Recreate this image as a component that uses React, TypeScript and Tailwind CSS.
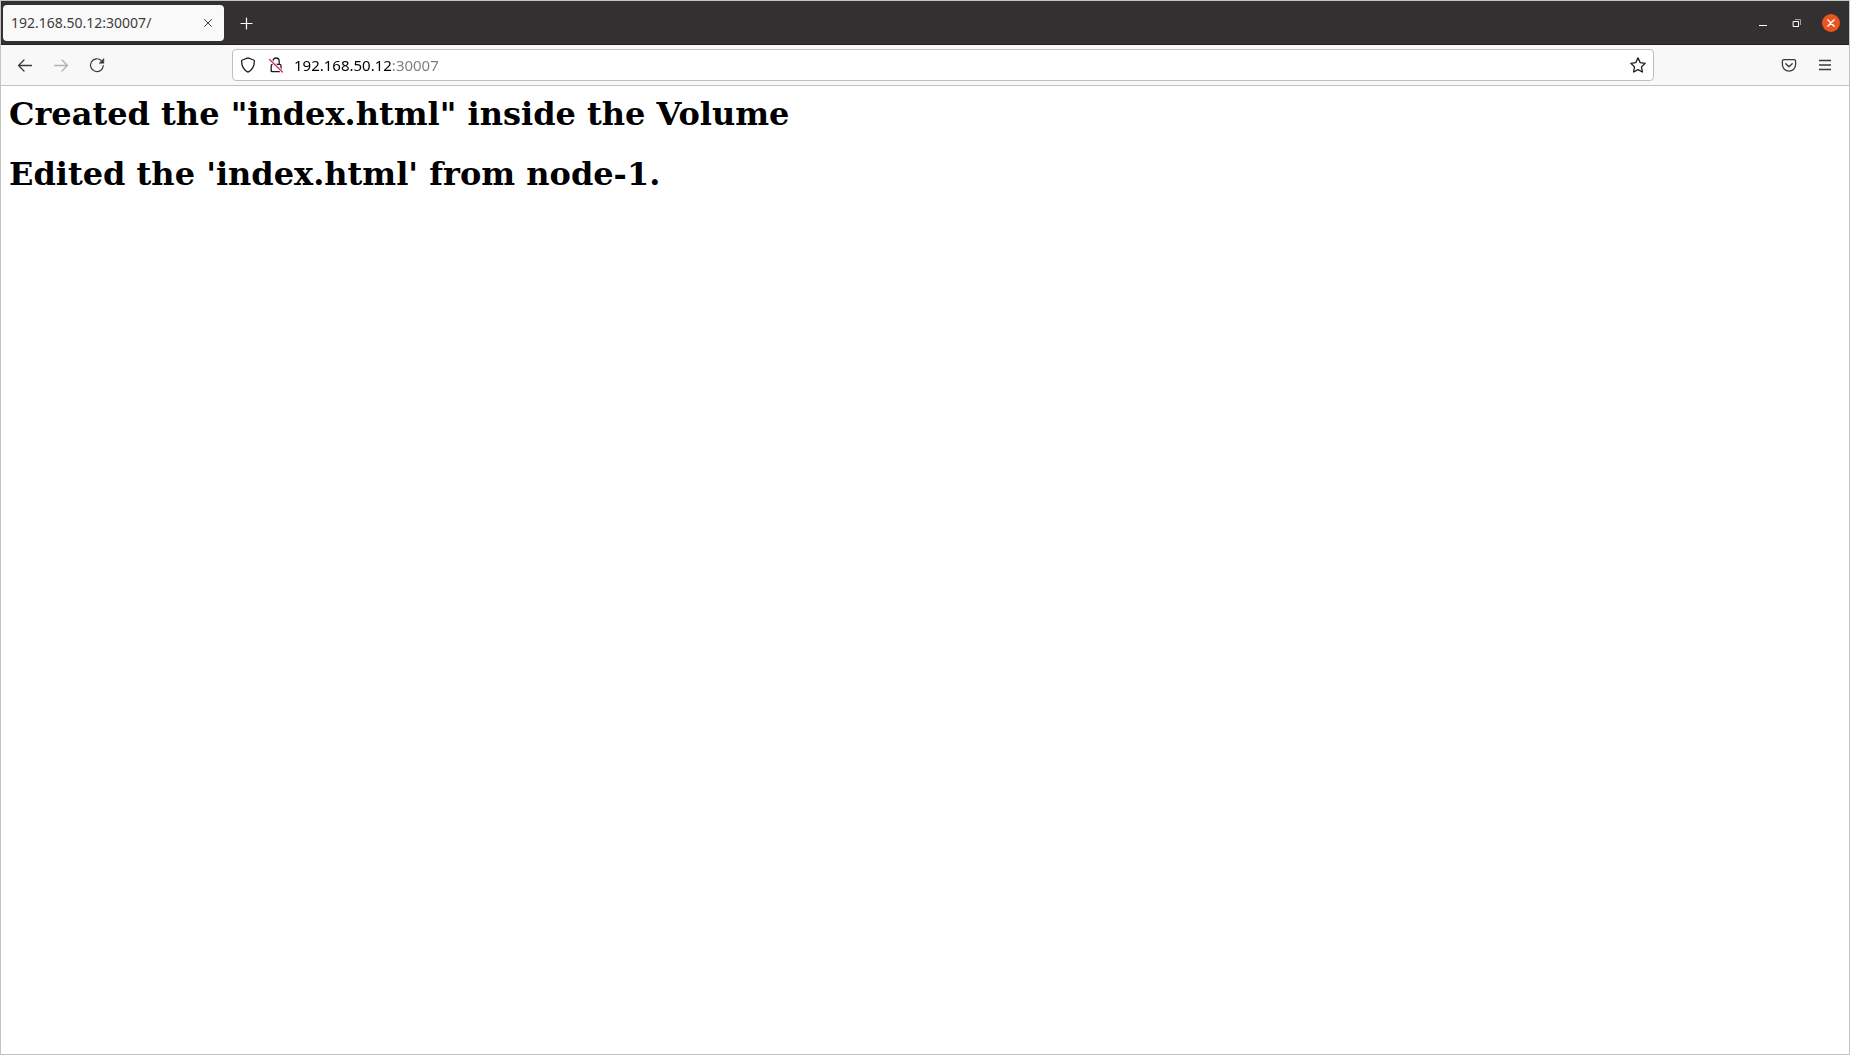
import { useState } from "react";
import type { ReactNode } from "react";

function Icon({ children }: { children: ReactNode }) {
  return (
    <svg
      viewBox="0 0 16 16"
      className="size-4 shrink-0"
      fill="none"
      stroke="currentColor"
      strokeWidth="1.3"
      strokeLinecap="round"
      strokeLinejoin="round"
      aria-hidden="true"
    >
      {children}
    </svg>
  );
}

function ToolButton({
  label,
  disabled,
  children,
}: {
  label: string;
  disabled?: boolean;
  children: ReactNode;
}) {
  return (
    <button
      type="button"
      aria-label={label}
      disabled={disabled}
      className="flex size-8 shrink-0 items-center justify-center rounded text-[#3a3a3a] disabled:text-[#b0b0b0]"
    >
      {children}
    </button>
  );
}

function TabStrip() {
  return (
    <header className="flex h-11 shrink-0 items-center border-b border-[#222020] bg-[#333031] pt-px pl-0.5 pr-[9px]">
      <div className="flex h-9 w-[221px] items-center justify-between rounded bg-[#f9f9f9] px-2 text-sm text-[#3d3d3d]">
        <span>192.168.50.12:30007/</span>
        <button type="button" aria-label="Close tab" className="flex size-4 items-center justify-center">
          <Icon>
            <path d="M4.500 4.500l7 7M11.500 4.500l-7 7" strokeWidth="1" />
          </Icon>
        </button>
      </div>
      <button
        type="button"
        aria-label="New tab"
        className="ml-1.5 flex size-8 items-center justify-center text-white"
      >
        <Icon>
          <path d="M8.500 3v11M3 8.500h11" strokeWidth="1.200" />
        </Icon>
      </button>
      <div className="ml-auto flex items-center gap-4 text-white">
        <button type="button" aria-label="Minimize" className="flex size-[18px] items-center justify-center">
          <Icon>
            <path d="M4 10.500h8" strokeWidth="1" strokeLinecap="butt" />
          </Icon>
        </button>
        <button type="button" aria-label="Restore" className="flex size-[18px] items-center justify-center">
          <Icon>
            <path d="M6 4.500h5.500V10" stroke="#a09e9e" strokeWidth="1" strokeLinecap="butt" strokeLinejoin="miter" />
            <path d="M4.500 6.500h5v5h-5z" strokeWidth="1" strokeLinejoin="miter" />
          </Icon>
        </button>
        <button
          type="button"
          aria-label="Close window"
          className="flex size-[18px] items-center justify-center rounded-full bg-[#e95420]"
        >
          <Icon>
            <path d="M4.800 4.800l6.400 6.400M11.200 4.800l-6.400 6.400" strokeWidth="1.400" />
          </Icon>
        </button>
      </div>
    </header>
  );
}

function AddressBar() {
  const [url, setUrl] = useState("192.168.50.12:30007");
  return (
    <div className="flex h-8 min-w-0 flex-1 items-center rounded border border-[#bfbfbf] bg-white px-[7px] text-[#1c1c1c]">
      <button type="button" aria-label="Tracking protection" className="flex">
        <Icon>
          <path d="M8 .9L13.600 3c.5.2.8.6.8 1.100 0 5.200-2 9-6.400 11-4.400-2-6.400-5.800-6.400-11 0-.5.300-.9.800-1.100z" />
        </Icon>
      </button>
      <button type="button" aria-label="Connection is not secure" className="ml-3 flex">
        <Icon>
          <path d="M4.800 6.800V4.200a3.200 3.200 0 0 1 6.400 0v3M3.200 14.600V8.600c0-.8.500-1.300 1.300-1.300h7.200c.8 0 1.300.5 1.300 1.300v4.400M3.200 13.300c0 .8.500 1.300 1.300 1.300h7.500" />
          <path d="M1.500 2.500l13 12.500" stroke="#fff" strokeWidth="3" strokeLinecap="butt" />
          <path d="M1.500 2.500l13 12.500" stroke="#e22850" strokeWidth="1.300" />
        </Icon>
      </button>
      <input
        type="text"
        aria-label="Address"
        value={url}
        onChange={(e) => setUrl(e.target.value)}
        spellCheck={false}
        className="ml-2.5 h-6 min-w-0 flex-1 bg-[linear-gradient(90deg,#000000_98px,#7c7c80_98px)] bg-clip-text text-[15px] text-transparent caret-black outline-none"
      />
      <button type="button" aria-label="Bookmark this page" className="flex">
        <Icon>
          <path d="M8 .9l2.200 4.700 5 .7-3.700 3.600.9 5.100L8 12.600 3.600 15l.9-5.100L.8 6.300l5-.7z" />
        </Icon>
      </button>
    </div>
  );
}

function Toolbar() {
  return (
    <nav
      aria-label="Navigation"
      className="flex h-[41px] shrink-0 items-center border-b border-[#c3c3c3] bg-[#f8f8f8] px-2"
    >
      <div className="flex gap-1">
        <ToolButton label="Back">
          <Icon>
            <path d="M14.500 8.500h-13M7 3L1.500 8.500 7 14" />
          </Icon>
        </ToolButton>
        <ToolButton label="Forward" disabled>
          <Icon>
            <path d="M1.500 8.500h13M9 3l5.500 5.500L9 14" />
          </Icon>
        </ToolButton>
        <ToolButton label="Reload">
          <Icon>
            <path d="M14.300 8.500A6.400 6.400 0 1 1 12.300 3.500" strokeWidth="1.200" />
            <path d="M14.800 1.800v4.400h-4.400z" fill="currentColor" strokeWidth=".6" />
          </Icon>
        </ToolButton>
      </div>
      <div className="mr-[119px] ml-[119px] flex min-w-0 flex-1">
        <AddressBar />
      </div>
      <div className="flex gap-1">
        <ToolButton label="Save to Pocket">
          <Icon>
            <path d="M2.800 2.600h10.400c.8 0 1.400.6 1.400 1.400v3.600a6.600 6.600 0 0 1-13.200 0V4c0-.8.600-1.400 1.400-1.400z" />
            <path d="M4.800 6.700L8 9.700l3.200-3" strokeWidth="1.400" />
          </Icon>
        </ToolButton>
        <ToolButton label="Open application menu">
          <Icon>
            <path d="M2 3.500h12M2 8h12M2 12.500h12" strokeLinecap="butt" />
          </Icon>
        </ToolButton>
      </div>
    </nav>
  );
}

export default function App() {
  return (
    <div className="flex min-h-screen flex-col border border-[#c3c3c3] bg-white font-['Noto_Sans',sans-serif]">
      <TabStrip />
      <Toolbar />
      <main className="flex flex-1 flex-col gap-[22px] px-2 py-[9px] font-['DejaVu_Serif',serif] text-[32px] leading-[38px] font-bold text-black">
        <h1>Created the "index.html" inside the Volume</h1>
        <h1>Edited the 'index.html' from node-1.</h1>
      </main>
    </div>
  );
}
